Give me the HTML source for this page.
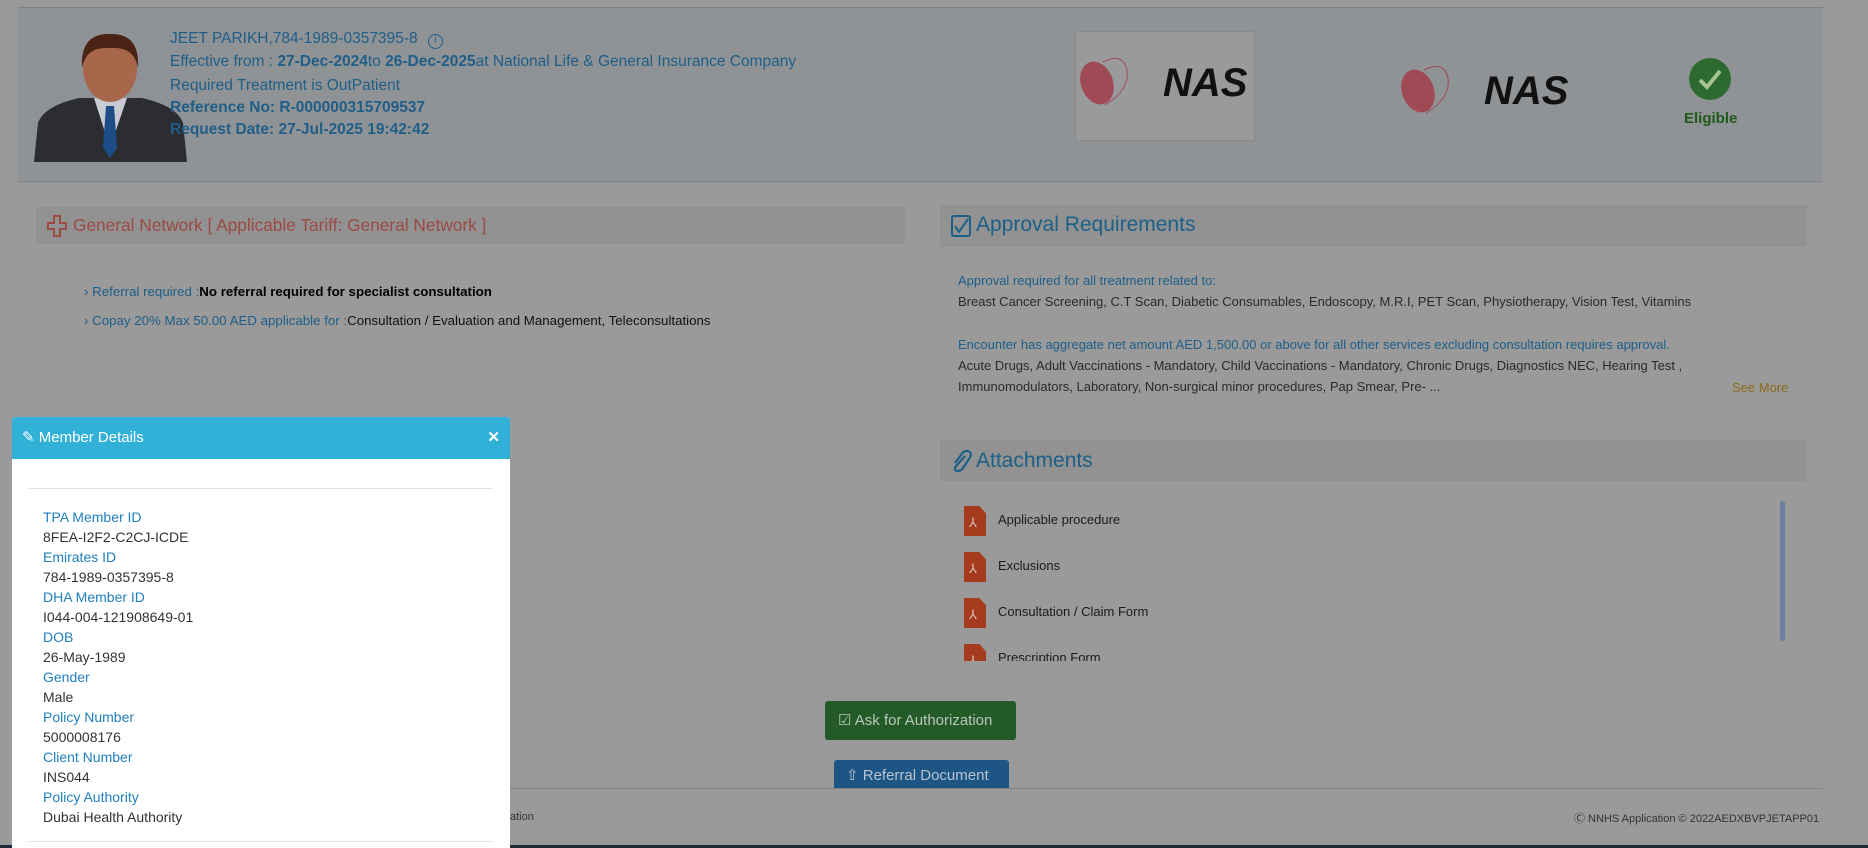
<!DOCTYPE html>
<html><head><meta charset="utf-8"><style>
*{margin:0;padding:0;box-sizing:border-box}
body{width:1868px;height:848px;overflow:hidden;background:#9a9a9a;font-family:"Liberation Sans",sans-serif;position:relative}
.a{position:absolute;white-space:nowrap}
.blue{color:#1f5e87}
.lab{color:#1f7fbf;font-size:14px}
.val{color:#333;font-size:14px}
.pdf{position:absolute;left:24px;width:22px;height:30px;background:#a63a1c;clip-path:polygon(0 0,70% 0,100% 25%,100% 100%,0 100%)}
.pdf:after{content:"⅄";position:absolute;left:5px;top:9px;color:#d8c0b8;font-size:13px}
</style></head><body>
<div class="a" style="left:18px;top:7px;width:1805px;height:175px;background:#909396;border-top:1px solid #7f8184;border-bottom:1px solid #7f8184"></div>
<div class="a" style="left:34px;top:28px;width:153px;height:134px;background:#8e9196;overflow:hidden">
<svg width="153" height="134" viewBox="0 0 153 134">
<path d="M0 134 L4 95 Q10 78 45 70 L108 70 Q143 78 149 95 L153 134Z" fill="#2b2d31"/>
<path d="M60 70 L76 120 L93 70Z" fill="#c8ccd2"/>
<path d="M72 78 L80 78 L83 120 L76 130 L69 120Z" fill="#1d4d86"/>
<ellipse cx="76" cy="40" rx="27" ry="34" fill="#a8674b"/>
<path d="M48 40 Q46 5 76 6 Q106 5 104 40 Q100 18 76 20 Q52 18 48 40Z" fill="#4a2314"/>
</svg></div>
<div class="a blue" style="left:170px;top:30px;font-size:15.5px">JEET PARIKH,784-1989-0357395-8 <span style="display:inline-block;width:15px;height:15px;border:1.5px solid #1f5e87;border-radius:50%;font-size:10px;text-align:center;line-height:12px;margin-left:6px">i</span></div>
<div class="a blue" style="left:170px;top:53px;font-size:15.5px">Effective from : <b style="font-weight:600">27-Dec-2024</b>to <b style="font-weight:600">26-Dec-2025</b>at National Life &amp; General Insurance Company</div>
<div class="a blue" style="left:170px;top:77px;font-size:15.5px">Required Treatment is OutPatient</div>
<div class="a blue" style="left:170px;top:99px;font-size:15.5px;font-weight:600">Reference No: R-000000315709537</div>
<div class="a blue" style="left:170px;top:121px;font-size:15.5px;font-weight:600">Request Date: 27-Jul-2025 19:42:42</div>
<div class="a" style="left:1075px;top:31px;width:180px;height:110px;background:#999a9b;border:1px solid #8a8a8a"></div>
<svg class="a" style="left:1075px;top:50px" width="180" height="70" viewBox="0 0 180 70">
<ellipse cx="22" cy="33" rx="16" ry="22" transform="rotate(-20 22 33)" fill="#a04a55"/>
<path d="M30 55 Q55 40 52 20 Q48 2 28 12" fill="none" stroke="#a04a55" stroke-width="1"/>
<text x="88" y="46" font-size="40" font-weight="bold" font-style="italic" fill="#111" font-family="Liberation Sans">NAS</text></svg>
<svg class="a" style="left:1396px;top:58px" width="180" height="70" viewBox="0 0 180 70">
<ellipse cx="22" cy="33" rx="16" ry="22" transform="rotate(-20 22 33)" fill="#a04a55"/>
<path d="M30 55 Q55 40 52 20 Q48 2 28 12" fill="none" stroke="#a04a55" stroke-width="1"/>
<text x="88" y="46" font-size="40" font-weight="bold" font-style="italic" fill="#111" font-family="Liberation Sans">NAS</text></svg>
<svg class="a" style="left:1689px;top:58px" width="42" height="42"><circle cx="21" cy="21" r="21" fill="#2d6a30"/><path d="M11 22 L18 29 L31 13" stroke="#a5c48f" stroke-width="4" fill="none"/></svg>
<div class="a" style="left:1684px;top:110px;font-size:15px;font-weight:bold;color:#1f5a1a">Eligible</div>
<div class="a" style="left:36px;top:207px;width:869px;height:37px;background:#929292"></div>
<svg class="a" style="left:46px;top:214px" width="22" height="24"><path d="M8 2h6v7h6v6h-6v7h-6v-7h-6v-6h6z" fill="none" stroke="#9b4a44" stroke-width="2"/></svg>
<div class="a" style="left:73px;top:215px;font-size:17.3px;color:#9b4a44">General Network [ Applicable Tariff: General Network ]</div>
<div class="a" style="left:84px;top:284px;font-size:13.3px"><span class="blue">› Referral required :</span><b style="color:#000">No referral required for specialist consultation</b></div>
<div class="a" style="left:84px;top:313px;font-size:13.3px"><span class="blue">› Copay 20% Max 50.00 AED applicable for :</span><span style="color:#111">Consultation / Evaluation and Management, Teleconsultations</span></div>
<div class="a" style="left:940px;top:205px;width:867px;height:42px;background:#929292"></div>
<div class="a" style="left:951px;top:215px;width:20px;height:22px;border:2px solid #1c6088;border-radius:3px"></div>
<svg class="a" style="left:951px;top:215px" width="20" height="22"><path d="M4 11 L8 17 L17 4" stroke="#1c6088" stroke-width="2" fill="none"/></svg>
<div class="a" style="left:976px;top:213px;font-size:21px;color:#1c6088">Approval Requirements</div>
<div class="a blue" style="left:958px;top:273px;font-size:13px">Approval required for all treatment related to:</div>
<div class="a" style="left:958px;top:294px;font-size:13px;color:#2a2a2a">Breast Cancer Screening, C.T Scan, Diabetic Consumables, Endoscopy, M.R.I, PET Scan, Physiotherapy, Vision Test, Vitamins</div>
<div class="a blue" style="left:958px;top:337px;font-size:13px">Encounter has aggregate net amount AED 1,500.00 or above for all other services excluding consultation requires approval.</div>
<div class="a" style="left:958px;top:358px;font-size:13px;color:#2a2a2a">Acute Drugs, Adult Vaccinations - Mandatory, Child Vaccinations - Mandatory, Chronic Drugs, Diagnostics NEC, Hearing Test ,</div>
<div class="a" style="left:958px;top:379px;font-size:13px;color:#2a2a2a">Immunomodulators, Laboratory, Non-surgical minor procedures, Pap Smear, Pre- ...</div>
<div class="a" style="left:1732px;top:380px;font-size:13px;color:#8a6a1a">See More</div>
<div class="a" style="left:940px;top:440px;width:867px;height:41px;background:#929292"></div>
<svg class="a" style="left:950px;top:448px" width="22" height="26"><path d="M15 8 L6 18 Q3 23 8 23 Q11 23 13 20 L19 11 Q23 5 18 3 Q14 2 11 7 L5 15" fill="none" stroke="#1c6088" stroke-width="2.2"/></svg>
<div class="a" style="left:976px;top:449px;font-size:21px;color:#1c6088">Attachments</div>
<div class="a" style="left:940px;top:500px;width:860px;height:161px;overflow:hidden">
<div class="pdf" style="top:6px"></div>
<div style="position:absolute;left:58px;top:12px;font-size:13px;color:#1a1a1a">Applicable procedure</div>
<div class="pdf" style="top:52px"></div>
<div style="position:absolute;left:58px;top:58px;font-size:13px;color:#1a1a1a">Exclusions</div>
<div class="pdf" style="top:98px"></div>
<div style="position:absolute;left:58px;top:104px;font-size:13px;color:#1a1a1a">Consultation / Claim Form</div>
<div class="pdf" style="top:144px"></div>
<div style="position:absolute;left:58px;top:150px;font-size:13px;color:#1a1a1a">Prescription Form</div>
</div>
<div class="a" style="left:1780px;top:501px;width:5px;height:140px;background:#6b7fa0;border-radius:3px"></div>
<div class="a" style="left:825px;top:701px;width:191px;height:39px;background:#245a28;border-radius:3px;color:#b8c8b8;font-size:15px;line-height:39px;padding-left:13px">☑ Ask for Authorization</div>
<div class="a" style="left:834px;top:760px;width:175px;height:28px;background:#1d5585;border-radius:3px 3px 0 0;color:#b8c4d0;font-size:15px;line-height:32px;padding-left:12px;overflow:hidden">⇧ Referral Document</div>
<div class="a" style="left:18px;top:788px;width:1805px;height:1px;background:#858585"></div>
<div class="a" style="left:480px;top:811px;font-size:11px;color:#333">Application</div>
<div class="a" style="left:1574px;top:810px;font-size:11px;color:#333">Ⓒ NNHS Application © 2022AEDXBVPJETAPP01</div>
<div class="a" style="left:0;top:845px;width:1868px;height:3px;background:#1e2a3a"></div>
<div class="a" style="left:12px;top:417px;width:498px;height:431px;background:#fff;border-radius:3px 3px 0 0">
<div style="height:42px;background:#31b0d8;border-radius:3px 3px 0 0;color:#fff;font-size:15px;line-height:42px;padding-left:10px">✎ Member Details<span style="position:absolute;right:10px;font-weight:bold">✕</span></div>
<div style="position:absolute;left:16px;top:71px;width:465px;height:1px;background:#e2e2e2"></div>
<div style="position:absolute;left:31px;top:90px;line-height:20px">
<div class="lab">TPA Member ID</div><div class="val">8FEA-I2F2-C2CJ-ICDE</div>
<div class="lab">Emirates ID</div><div class="val">784-1989-0357395-8</div>
<div class="lab">DHA Member ID</div><div class="val">I044-004-121908649-01</div>
<div class="lab">DOB</div><div class="val">26-May-1989</div>
<div class="lab">Gender</div><div class="val">Male</div>
<div class="lab">Policy Number</div><div class="val">5000008176</div>
<div class="lab">Client Number</div><div class="val">INS044</div>
<div class="lab">Policy Authority</div><div class="val">Dubai Health Authority</div>
</div>
<div style="position:absolute;left:16px;top:424px;width:465px;height:1px;background:#e2e2e2"></div>
</div>
</body></html>
